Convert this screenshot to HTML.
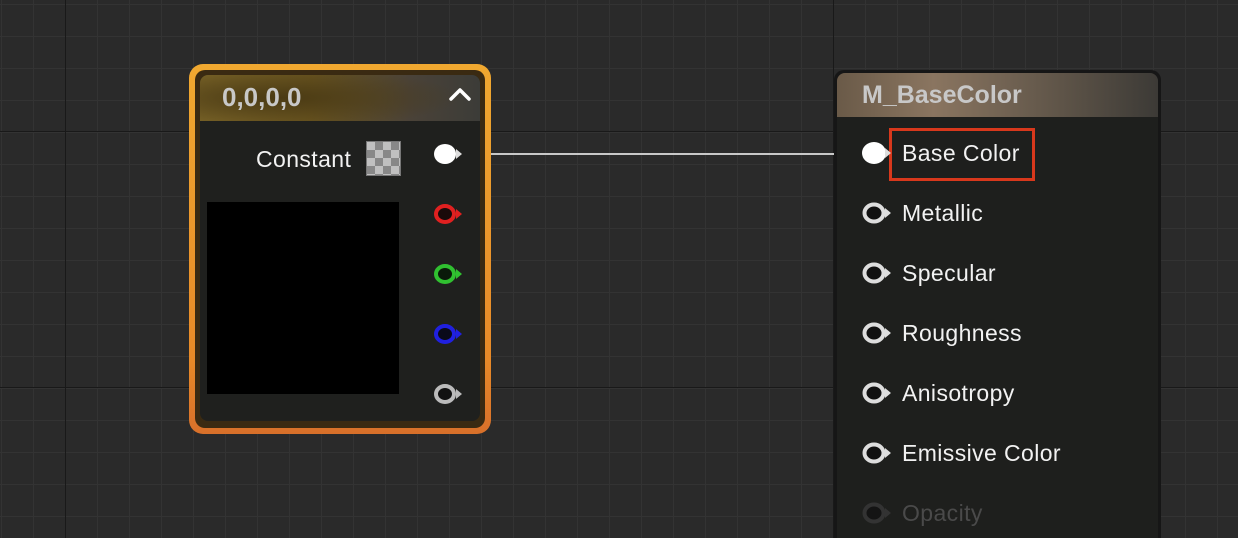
<!DOCTYPE html>
<html><head><style>
html,body{margin:0;padding:0;overflow:hidden;width:1238px;height:538px}
body{position:relative;font-family:"Liberation Sans",sans-serif;
background-color:#2a2a2a;
background-image:linear-gradient(#333 1px,transparent 1px),linear-gradient(90deg,#333 1px,transparent 1px);
background-size:32px 32px;background-position:1px 4px;}
.abs{position:absolute}
.maj{position:absolute;background:#191919}
.t{position:absolute;color:#f2f2f2;font-size:23px;letter-spacing:0.4px;line-height:26px;white-space:nowrap}
</style></head><body>
<div class="maj" style="left:65px;top:0;width:1px;height:538px"></div>
<div class="maj" style="left:833px;top:0;width:1px;height:538px"></div>
<div class="maj" style="left:0;top:131px;width:1238px;height:1px"></div>
<div class="maj" style="left:0;top:387px;width:1238px;height:1px"></div>

<div class="abs" style="left:466px;top:153px;width:396px;height:2px;background:#c8c8c8"></div>

<div class="abs" style="left:189px;top:64px;width:302px;height:370px;border-radius:14px;background:linear-gradient(#f0a830,#e88a28 80%,#d8702a)"></div>
<div class="abs" style="left:195px;top:70px;width:290px;height:358px;border-radius:10px;background:#3a2a12"></div>
<div class="abs" style="left:200px;top:75px;width:280px;height:346px;border-radius:8px;background:#1f201e;overflow:hidden">
  <div style="height:46px;background:radial-gradient(ellipse 180px 30px at 80px 23px,#4a3a14,transparent),linear-gradient(90deg,#7a6428,#6a5520 40%,#4a4238 75%,#3c3c38);"></div>
</div>
<div class="abs" style="left:222px;top:82px;color:#c8c8c8;font-size:26px;font-weight:bold;line-height:30px">0,0,0,0</div>
<svg class="abs" style="left:448px;top:86px" width="24" height="18"><path d="M3 13 L12 4 L21 13" stroke="#fff" stroke-width="3.5" fill="none" stroke-linecap="round" stroke-linejoin="round"/></svg>
<div class="t" style="left:256px;top:146px">Constant</div>
<div class="abs" style="left:366px;top:141px;width:35px;height:35px;border:1px solid #777;box-sizing:border-box;background-color:#c0c0c0;background-image:linear-gradient(45deg,#888 25%,transparent 25%,transparent 75%,#888 75%),linear-gradient(45deg,#888 25%,transparent 25%,transparent 75%,#888 75%);background-size:16px 16px;background-position:0 0,8px 8px"></div>
<div class="abs" style="left:207px;top:202px;width:192px;height:192px;background:#000"></div>

<svg class="abs" style="left:430px;top:140px" width="40" height="280">
  <g><ellipse cx="15" cy="14" rx="11" ry="10" fill="#fff"/><path d="M26 9 L32 14 L26 19Z" fill="#ddd"/></g>
  <g transform="translate(0,60)"><ellipse cx="15" cy="14" rx="9" ry="8" fill="#1a0a0a" stroke="#e02020" stroke-width="4"/><path d="M26 9 L32 14 L26 19Z" fill="#e02020"/></g>
  <g transform="translate(0,120)"><ellipse cx="15" cy="14" rx="9" ry="8" fill="#0a1a0a" stroke="#30c030" stroke-width="4"/><path d="M26 9 L32 14 L26 19Z" fill="#30c030"/></g>
  <g transform="translate(0,180)"><ellipse cx="15" cy="14" rx="9" ry="8" fill="#0a0a1a" stroke="#2020e0" stroke-width="4"/><path d="M26 9 L32 14 L26 19Z" fill="#2020e0"/></g>
  <g transform="translate(0,240)"><ellipse cx="15" cy="14" rx="9" ry="8" fill="#111" stroke="#bbb" stroke-width="4"/><path d="M26 9 L32 14 L26 19Z" fill="#bbb"/></g>
</svg>

<div class="abs" style="left:834px;top:70px;width:327px;height:480px;border-radius:10px;background:#161616"></div>
<div class="abs" style="left:837px;top:73px;width:321px;height:480px;border-radius:8px;background:#1e1f1d;overflow:hidden">
  <div style="height:44px;background:linear-gradient(90deg,#6a5a48,#8a7560 30%,#5e5448 70%,#3c3a36);"></div>
</div>
<div class="abs" style="left:862px;top:80px;color:#c8c8c8;font-size:25px;font-weight:bold;line-height:30px">M_BaseColor</div>
<div class="abs" style="left:889px;top:128px;width:146px;height:53px;border:3px solid #d8381c;box-sizing:border-box"></div>
<div class="t" style="left:902px;top:140px">Base Color</div>
<div class="t" style="left:902px;top:200px">Metallic</div>
<div class="t" style="left:902px;top:260px">Specular</div>
<div class="t" style="left:902px;top:320px">Roughness</div>
<div class="t" style="left:902px;top:380px">Anisotropy</div>
<div class="t" style="left:902px;top:440px">Emissive Color</div>
<div class="t" style="left:902px;top:500px;color:#4a4a4a">Opacity</div>
<svg class="abs" style="left:858px;top:139px" width="40" height="399">
  <g><ellipse cx="16" cy="14" rx="12" ry="11" fill="#fff"/><path d="M27 9 L33 14 L27 19Z" fill="#ddd"/></g>
  <g transform="translate(0,60)"><ellipse cx="16" cy="14" rx="9.5" ry="8.5" fill="#111" stroke="#ddd" stroke-width="4"/><path d="M27 9 L33 14 L27 19Z" fill="#ddd"/></g>
  <g transform="translate(0,120)"><ellipse cx="16" cy="14" rx="9.5" ry="8.5" fill="#111" stroke="#ddd" stroke-width="4"/><path d="M27 9 L33 14 L27 19Z" fill="#ddd"/></g>
  <g transform="translate(0,180)"><ellipse cx="16" cy="14" rx="9.5" ry="8.5" fill="#111" stroke="#ddd" stroke-width="4"/><path d="M27 9 L33 14 L27 19Z" fill="#ddd"/></g>
  <g transform="translate(0,240)"><ellipse cx="16" cy="14" rx="9.5" ry="8.5" fill="#111" stroke="#ddd" stroke-width="4"/><path d="M27 9 L33 14 L27 19Z" fill="#ddd"/></g>
  <g transform="translate(0,300)"><ellipse cx="16" cy="14" rx="9.5" ry="8.5" fill="#111" stroke="#ddd" stroke-width="4"/><path d="M27 9 L33 14 L27 19Z" fill="#ddd"/></g>
  <g transform="translate(0,360)"><ellipse cx="16" cy="14" rx="9.5" ry="8.5" fill="#141414" stroke="#333" stroke-width="4"/><path d="M27 9 L33 14 L27 19Z" fill="#333"/></g>
</svg>
</body></html>
